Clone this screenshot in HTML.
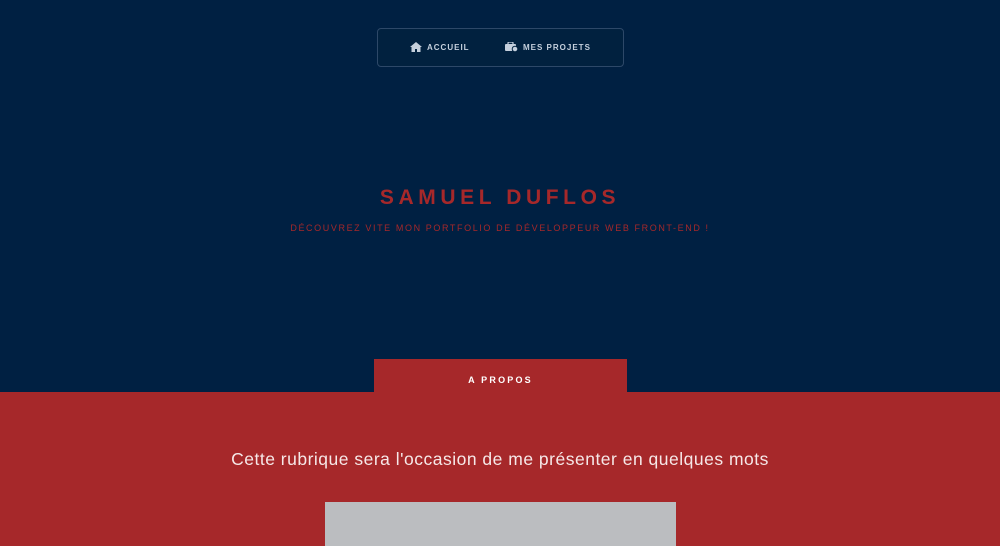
<!DOCTYPE html>
<html><head><meta charset="utf-8"><style>
*{margin:0;padding:0;box-sizing:border-box}
body{width:1000px;height:546px;overflow:hidden;background:#002042;font-family:"Liberation Sans",sans-serif;position:relative}
.nav{position:absolute;left:377px;top:28px;width:247px;height:39px;border:1px solid #2d4868;border-radius:4px;background:#01213f}
.nav span{position:absolute;top:14px;font-size:8px;font-weight:bold;letter-spacing:1px;color:#c5d0dd}
h1{position:absolute;left:0;width:1000px;top:186px;text-align:center;color:#a6282a;font-size:21px;letter-spacing:4.6px;font-weight:bold}
.sub{position:absolute;left:0;width:1000px;top:223px;text-align:center;color:#a6282a;font-size:9px;letter-spacing:1.6px}
.red{position:absolute;left:0;top:392px;width:1000px;height:154px;background:#a6282a}
.tab{position:absolute;left:374px;top:359px;width:253px;height:34px;background:#a6282a;color:#fff;font-size:9px;font-weight:bold;letter-spacing:2.2px;text-align:center;line-height:43px}
.p{position:absolute;left:0;width:1000px;top:449px;text-align:center;color:#f6e8e8;font-size:17.5px;letter-spacing:0.5px}
.box{position:absolute;left:325px;top:502px;width:351px;height:44px;background:#bbbdc0}
</style></head><body>
<div class="nav">
<svg style="position:absolute;left:32px;top:13px" width="12" height="10" viewBox="0 0 12 10"><path d="M6 0L0 5h1.5v5h3.5V7h2v3h3.5V5H12z" fill="#c5d0dd"/></svg>
<span style="left:49px">ACCUEIL</span>
<svg style="position:absolute;left:127px;top:13px" width="13" height="10" viewBox="0 0 13 10"><rect x="3" y="0" width="5" height="3" rx="1" fill="none" stroke="#c5d0dd" stroke-width="1.2"/><rect x="0" y="2" width="11" height="7" rx="1" fill="#c5d0dd"/><circle cx="10" cy="7" r="2.8" fill="#c5d0dd" stroke="#01213f"/></svg>
<span style="left:145px">MES PROJETS</span>
</div>
<h1>SAMUEL DUFLOS</h1>
<div class="sub">DÉCOUVREZ VITE MON PORTFOLIO DE DÉVELOPPEUR WEB FRONT-END !</div>
<div class="red"></div>
<div class="tab">A PROPOS</div>
<div class="p">Cette rubrique sera l'occasion de me présenter en quelques mots</div>
<div class="box"></div>
</body></html>
